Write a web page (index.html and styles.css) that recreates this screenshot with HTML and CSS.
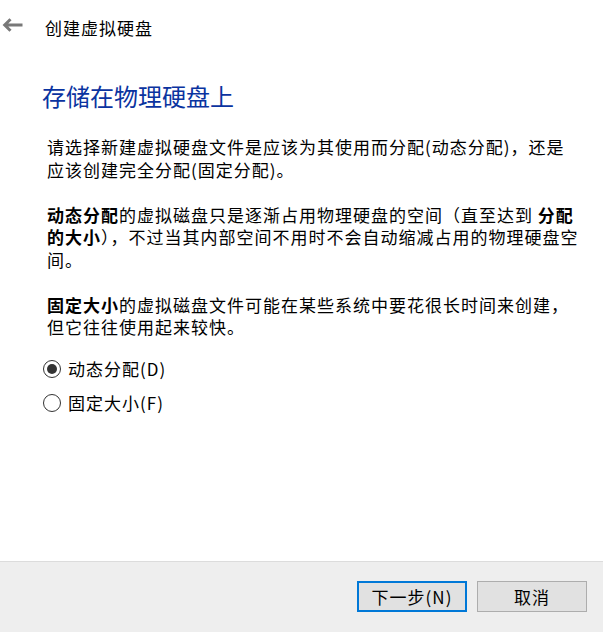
FILE: index.html
```html
<!DOCTYPE html>
<html lang="zh-CN">
<head>
<meta charset="utf-8">
<title>创建虚拟硬盘</title>
<link rel="stylesheet" href="styles.css">
</head>
<body>
<div class="window">
  <main class="main">
    <header class="header">
      <svg class="back" width="21" height="14" viewBox="0 0 21 14" aria-hidden="true">
        <path d="M20.5 7 H3 M8.5 1.2 L2.7 7 L8.5 12.8" fill="none" stroke="#787878" stroke-width="3" stroke-linecap="butt" stroke-linejoin="miter"/>
      </svg>
      <span class="title">创建虚拟硬盘</span>
    </header>
    <h1 class="heading">存储在物理硬盘上</h1>
    <div class="content">
      <p class="para">请选择新建虚拟硬盘文件是应该为其使用而分配(动态分配)，还是<br>应该创建完全分配(固定分配)。</p>
      <p class="para"><b>动态分配</b>的虚拟磁盘只是逐渐占用物理硬盘的空间（直至达到 <b>分配</b><br><b>的大小</b>），不过当其内部空间不用时不会自动缩减占用的物理硬盘空<br>间。</p>
      <p class="para"><b>固定大小</b>的虚拟磁盘文件可能在某些系统中要花很长时间来创建，<br>但它往往使用起来较快。</p>
    </div>
    <div class="options">
      <label class="option"><span class="radio checked"></span><span class="opt-text">动态分配(D)</span></label>
      <label class="option"><span class="radio"></span><span class="opt-text">固定大小(F)</span></label>
    </div>
  </main>
  <footer class="footer">
    <button class="btn primary">下一步(N)</button>
    <button class="btn">取消</button>
  </footer>
</div>
</body>
</html>
```
FILE: styles.css
```css
html, body {
  margin: 0;
  padding: 0;
  background: #ffffff;
}
body {
  font-family: "Noto Sans CJK SC", "Noto Sans", sans-serif;
  color: #000000;
}
.window {
  width: 603px;
  height: 632px;
  display: flex;
  flex-direction: column;
  overflow: hidden;
}
.main {
  flex: 1;
  display: flex;
  flex-direction: column;
}
.header {
  height: 56px;
  display: flex;
  align-items: center;
  padding-left: 2px;
}
.back {
  display: block;
  margin-bottom: 6px;
  margin-right: 22px;
}
.title {
  font-size: 17px;
  letter-spacing: 1px;
  line-height: 24px;
}
.heading {
  margin: 25px 0 0 42px;
  font-size: 24px;
  line-height: 30px;
  font-weight: normal;
  color: #0a33a0;
}
.content {
  margin: 25px 0 0 47px;
}
.para {
  margin: 0 0 22.5px 0;
  font-size: 17px;
  letter-spacing: 1px;
  line-height: 22.5px;
  white-space: nowrap;
}
.para:last-child {
  margin-bottom: 0;
}
.para b {
  font-weight: bold;
}
.options {
  margin: 13px 0 0 43px;
  display: flex;
  flex-direction: column;
}
.option {
  height: 34px;
  display: flex;
  align-items: center;
  gap: 7px;
}
.radio {
  width: 18px;
  height: 18px;
  box-sizing: border-box;
  border: 1.5px solid #333333;
  border-radius: 50%;
  display: flex;
  align-items: center;
  justify-content: center;
  background: #ffffff;
}
.radio.checked::after {
  content: "";
  width: 10px;
  height: 10px;
  border-radius: 50%;
  background: #333333;
}
.opt-text {
  font-size: 17px;
  letter-spacing: 1px;
  line-height: 24px;
}
.footer {
  height: 71px;
  box-sizing: border-box;
  border-top: 1px solid #dcdcdc;
  background: #eeeeee;
  display: flex;
  justify-content: flex-end;
  align-items: flex-start;
  gap: 10px;
  padding: 19px 16px 0 0;
  flex-shrink: 0;
}
.btn {
  width: 110px;
  height: 31px;
  box-sizing: border-box;
  background: #e1e1e1;
  border: 1px solid #adadad;
  font-family: "Noto Sans CJK SC", "Noto Sans", sans-serif;
  font-size: 17px;
  letter-spacing: 1px;
  color: #000000;
  padding: 0;
  display: flex;
  align-items: center;
  justify-content: center;
}
.btn.primary {
  border: 2px solid #0078d7;
}
```
